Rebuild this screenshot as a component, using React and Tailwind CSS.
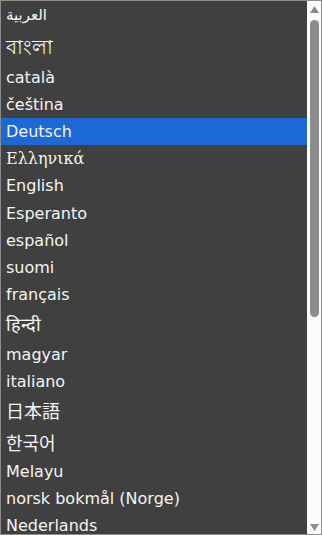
const languages = [
    { label: "العربية", h: "h-[29px]", font: "text-[15px]" },
    { label: "বাংলা", h: "h-[34px]", font: "text-[20px]" },
    { label: "català", h: "h-[27px]" },
    { label: "čeština", h: "h-[27px]" },
    { label: "Deutsch", h: "h-[27px]", selected: true },
    { label: "Ελληνικά", h: "h-[27px]", font: "text-[16px] [font-family:'DejaVu_Serif',serif]" },
    { label: "English", h: "h-[28px]" },
    { label: "Esperanto", h: "h-[27px]" },
    { label: "español", h: "h-[27px]" },
    { label: "suomi", h: "h-[27px]" },
    { label: "français", h: "h-[27px]" },
    { label: "हिन्दी", h: "h-[33px]", font: "text-[18px]" },
    { label: "magyar", h: "h-[27px]" },
    { label: "italiano", h: "h-[27px]" },
    { label: "日本語", h: "h-[33px]", font: "text-[18px]" },
    { label: "한국어", h: "h-[30px]", font: "text-[18px]" },
    { label: "Melayu", h: "h-[27px]" },
    { label: "norsk bokmål (Norge)", h: "h-[27px]" },
    { label: "Nederlands", h: "h-[27px]" },
];

const App = () => {
    return (
        <div className="w-[322px] h-[535px] flex border border-[#8c8c8c] bg-[#404040] overflow-hidden [font-family:'DejaVu_Sans','Noto_Sans_CJK_JP',sans-serif]">
            {/* list */}
            <div className="flex-1 flex flex-col overflow-hidden">
                {languages.map((lang) => (
                    <div
                        key={lang.label}
                        className={`${lang.h} shrink-0 flex items-center pl-[5px] whitespace-nowrap text-[#f4f4f4] ${lang.selected ? "bg-[#1c68d5]" : ""} ${lang.font || "text-[16px]"}`}>
                        {lang.label}
                    </div>
                ))}
            </div>

            {/* scrollbar */}
            <div className="w-[14px] shrink-0 bg-[#fcfcfc] flex flex-col items-center pt-[5px] pb-[3px]">
                <svg width="9" height="7" viewBox="0 0 9 7">
                    <polygon points="4.5,0 9,7 0,7" fill="#8c8c8c" />
                </svg>
                <div className="mt-[7px] w-[9px] h-[297px] rounded-full bg-[#8c8c8c]" />
                <div className="flex-1" />
                <svg width="9" height="7" viewBox="0 0 9 7">
                    <polygon points="0,0 9,0 4.5,7" fill="#8c8c8c" />
                </svg>
            </div>
        </div>
    );
};

export default App;
